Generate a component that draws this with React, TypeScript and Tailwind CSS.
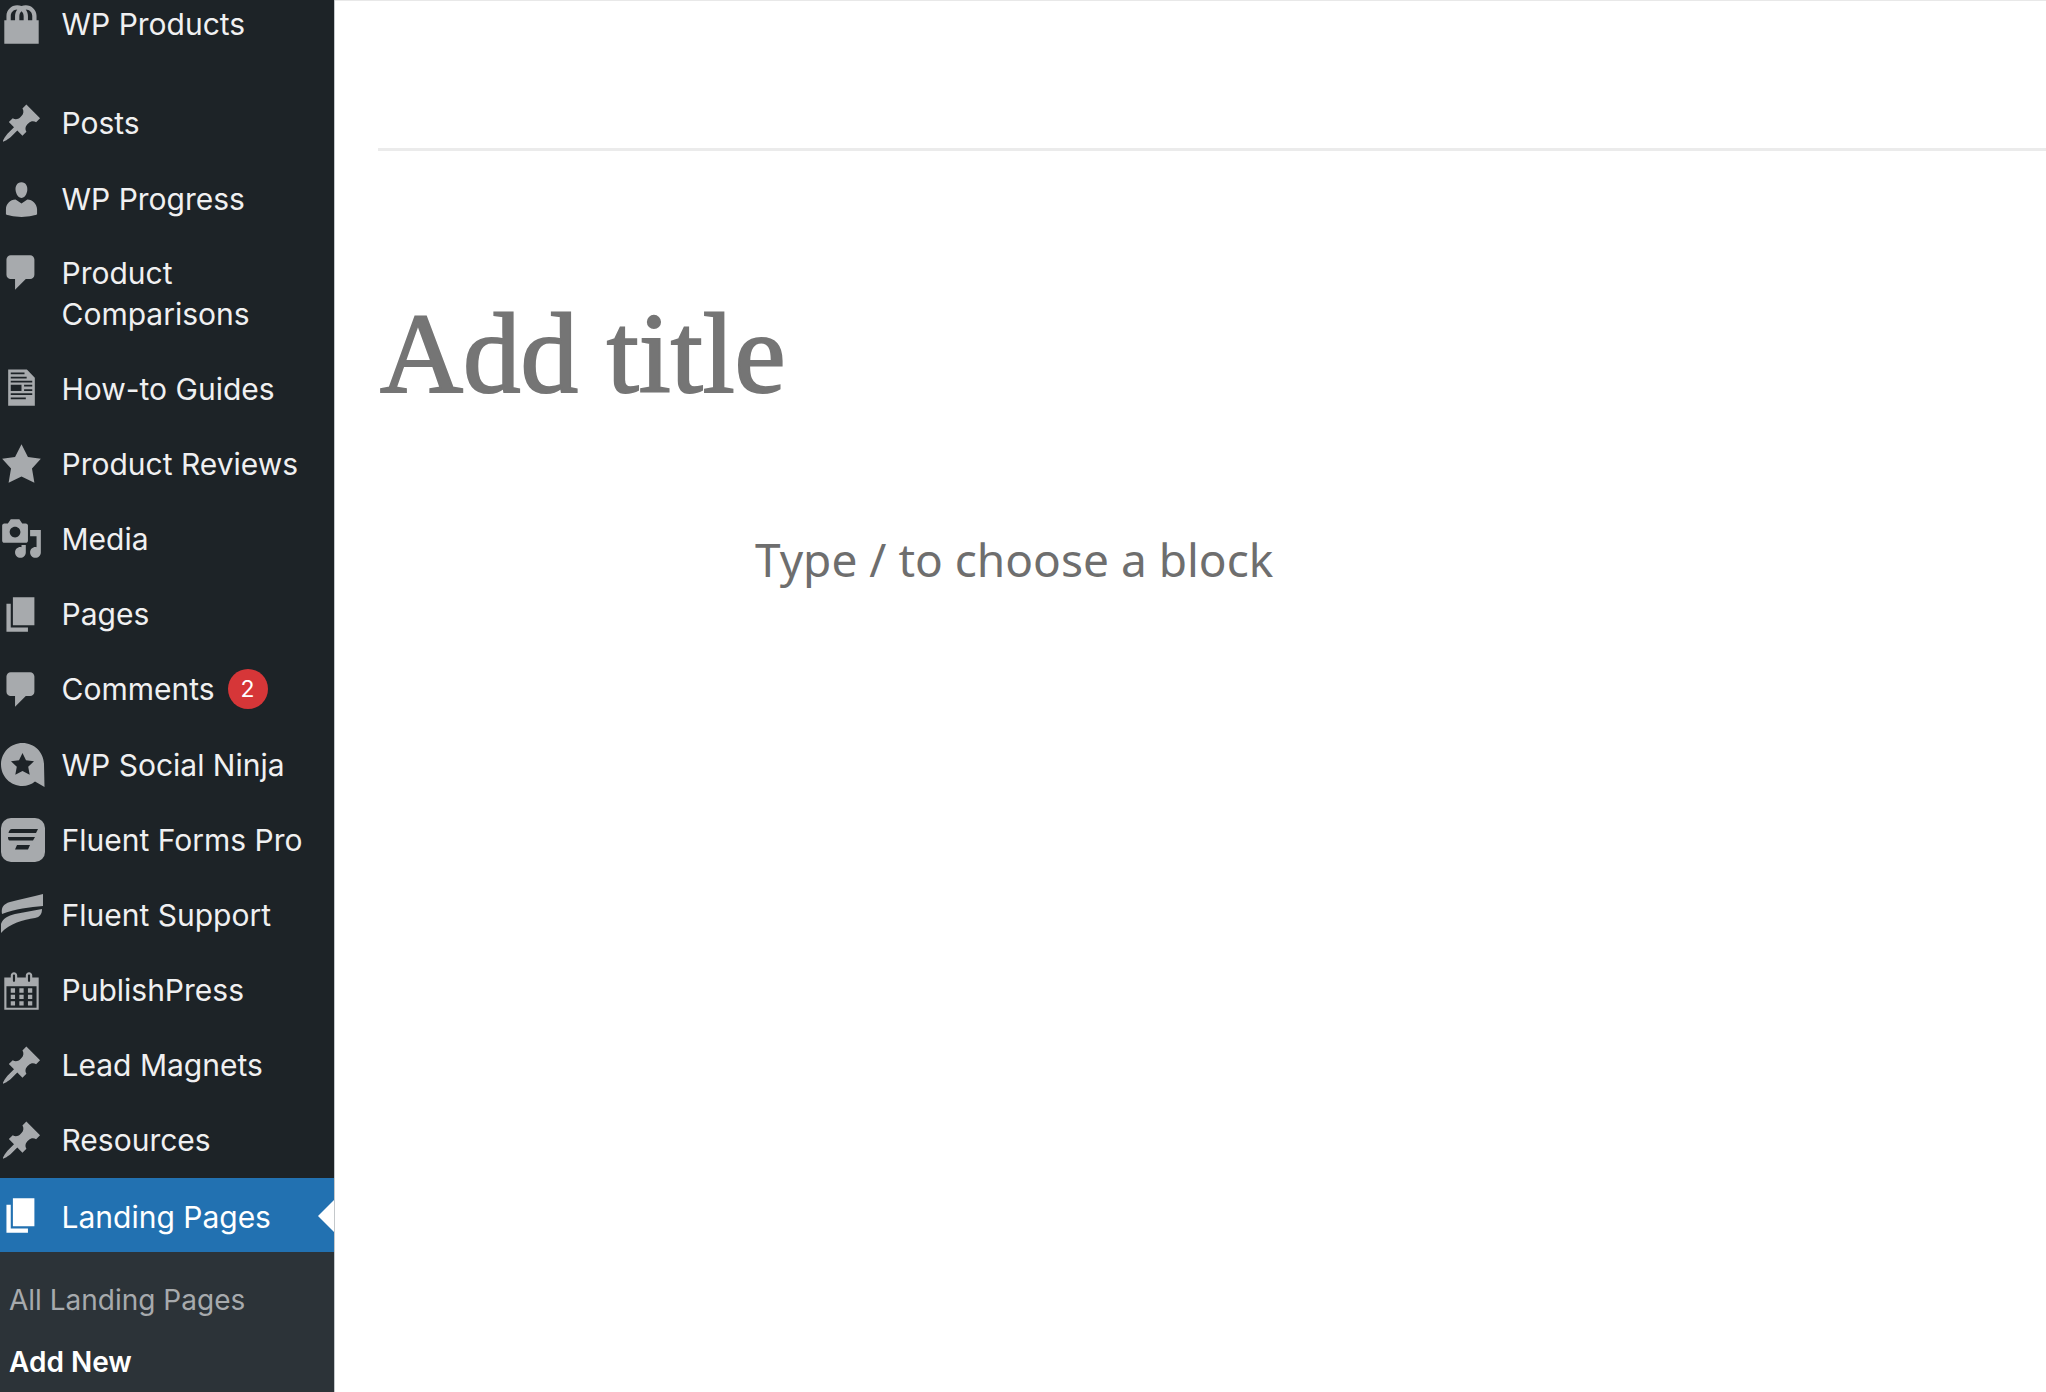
import type { ReactNode } from 'react'

const d = {
  bag: 'M17 8h1v11H2V8h1V6c0-2.76 2.24-5 5-5 .71 0 1.39.15 2 .42.61-.27 1.29-.42 2-.42 2.76 0 5 2.24 5 5v2zM5 6v2h2V6c0-1.13.39-2.16 1.02-3H8C6.35 3 5 4.35 5 6zm10 2V6c0-1.65-1.35-3-3-3h-.02c.63.84 1.02 1.87 1.02 3v2h2zm-5-4.22C9.39 4.33 9 5.12 9 6v2h2V6c0-.88-.39-1.67-1-2.22z',
  pin: 'M10.44 3.02l1.82-1.82 6.36 6.35-1.83 1.82c-1.05-.68-2.48-.57-3.41.36l-.75.75c-.92.93-1.04 2.35-.35 3.41l-1.83 1.82-2.41-2.41-2.8 2.79c-.42.42-3.38 2.71-3.8 2.29s1.86-3.39 2.28-3.81l2.79-2.79L4.1 9.36l1.83-1.82c1.05.69 2.48.57 3.4-.36l.75-.75c.93-.92 1.05-2.35.36-3.41z',
  user: 'M10 9.25c-2.27 0-2.73-3.44-2.73-3.44C7 4.02 7.82 2 9.97 2c2.16 0 2.98 2.02 2.71 3.81 0 0-.41 3.44-2.68 3.44zm0 2.57L12.72 10c2.39 0 4.52 2.33 4.52 4.53v2.49s-3.65 1.13-7.24 1.13c-3.65 0-7.24-1.13-7.24-1.13v-2.49c0-2.25 1.94-4.48 4.47-4.48z',
  comment: 'M5 2h9c1.1 0 2 .9 2 2v7c0 1.1-.9 2-2 2h-2l-5 5v-5H5c-1.1 0-2-.9-2-2V4c0-1.1.9-2 2-2z',
  doc: 'M3.800 1.200h8.700L16.200 5v13H3.800V1.200zM5 2.600v.8h6.400v-.8H5zm0 1.900v.8h7.400v-.8H5zm0 1.900v.8h10v-.8H5zm0 1.900v2.900h5V8.300H5zm6.200 0v.8H15v-.8h-3.800zm0 2.100v.8H15v-.8h-3.800zM5 12.200v.8h10v-.8H5zm0 2v.8h7v-.8H5z',
  star: 'M10 1l3 6 6 .75-4.12 4.62L16 19l-6-3-6 3 1.13-6.63L1 7.75 7 7z',
  media: 'M13 11V4c0-.55-.45-1-1-1h-1.67L9 1H5L3.67 3H2c-.55 0-1 .45-1 1v7c0 .55.45 1 1 1h10c.55 0 1-.45 1-1zM7 4.500c1.380 0 2.500 1.120 2.500 2.500S8.380 9.500 7 9.500 4.500 8.380 4.500 7 5.620 4.500 7 4.500zM14 6h5v10.500c0 1.380-1.120 2.500-2.500 2.500S14 17.880 14 16.500s1.120-2.500 2.500-2.500c.170 0 .340.020.500.050V9h-3V6zm-4 8.050V13h2v3.500c0 1.380-1.120 2.500-2.500 2.500S7 17.880 7 16.500 8.120 14 9.500 14c.170 0 .340.020.500.050z',
  page: 'M6 15V2h10v13H6zm-1 1h8v2H3V5h2v11z',
  calendar: 'M15 4h3v15H2V4h3V3c0-.41.15-.76.44-1.060.29-.29.65-.44 1.060-.44s.77.15 1.060.44c.29.3.44.65.44 1.060v1h4V3c0-.41.15-.76.44-1.060.29-.29.65-.44 1.060-.44s.77.15 1.060.44c.29.3.44.65.44 1.060v1zM6 3v2.500c0 .14.05.26.15.36.09.09.21.14.35.14s.26-.05.35-.14c.1-.1.15-.22.15-.36V3c0-.14-.05-.26-.15-.35-.09-.1-.21-.15-.35-.15s-.26.05-.35.15c-.1.09-.15.21-.15.35zm7 0v2.500c0 .14.05.26.14.36.1.09.22.14.36.14s.26-.05.36-.14c.09-.1.14-.22.14-.36V3c0-.14-.05-.26-.14-.35-.1-.1-.22-.15-.36-.15s-.26.05-.36.15c-.09.09-.14.21-.14.35zm4 15V8H3v10h14zM7 9v2H5V9h2zm2 0h2v2H9V9zm4 2V9h2v2h-2zm-6 1v2H5v-2h2zm2 0h2v2H9v-2zm4 2v-2h2v2h-2zm-6 1v2H5v-2h2zm4 2H9v-2h2v2zm4 0h-2v-2h2v2z',
}

const Dash = ({ path }: { path: string }) => (
  <svg viewBox="0 0 20 20" className="h-[43px] w-[43px]" fill="currentColor">
    <path d={path} fillRule="evenodd" />
  </svg>
)

const SocialNinja = () => (
  <svg viewBox="0 0 45 45" className="h-[45px] w-[45px]">
    <path d="M22.500 1C34.500 1 44 10.500 44 22.500L44.500 45 35 39.500C31.500 42.300 27.200 44 22.500 44 10.500 44 1 34.500 1 22.500S10.500 1 22.500 1z" fill="#a7aaad" />
    <path d="M22.500 11l3.500 7.200 8 1.100-5.800 5.500 1.500 7.900-7.200-3.800-7.200 3.800 1.500-7.900-5.800-5.500 8-1.100z" fill="#1d2327" />
  </svg>
)

const FluentForms = () => (
  <svg viewBox="0 0 45 45" className="h-[45px] w-[45px]">
    <rect x="1" y="1" width="44" height="44" rx="10" fill="#a7aaad" />
    <path d="M12 12h26l-2 4H8.500c.4-2.300 1.500-4 3.500-4zM8 20h27l-2 3.500H9.500C8.500 23.500 8 22 8 20zM17 28h13l-2 4.500H15z" fill="#1d2327" />
  </svg>
)

const FluentSupport = () => (
  <svg viewBox="0 0 45 45" className="h-[45px] w-[45px]">
    <path d="M43 2v12C30 15 15 17 2 22c-1-6 1-10 8-12C20 7 33 5 43 2z" fill="#a7aaad" />
    <path d="M42 17c0 5-2 8-7 9-12 2-25 5-34 15v-9c2-6 7-8 14-10 9-2 18-3 27-5z" fill="#a7aaad" />
  </svg>
)

const Row = ({ icon, height, children }: { icon: ReactNode; height: string; children: ReactNode }) => (
  <div className={`flex items-center text-[#f0f0f1] ${height}`}>
    <div className="flex w-[61.500px] shrink-0 items-center text-[#a7aaad]">{icon}</div>
    <div className="leading-[40px]">{children}</div>
  </div>
)

const rows: { label: string; icon: ReactNode }[] = [
  { label: 'How-to Guides', icon: <Dash path={d.doc} /> },
  { label: 'Product Reviews', icon: <Dash path={d.star} /> },
  { label: 'Media', icon: <Dash path={d.media} /> },
  { label: 'Pages', icon: <Dash path={d.page} /> },
  { label: 'Comments', icon: <Dash path={d.comment} /> },
  { label: 'WP Social Ninja', icon: <SocialNinja /> },
  { label: 'Fluent Forms Pro', icon: <FluentForms /> },
  { label: 'Fluent Support', icon: <FluentSupport /> },
  { label: 'PublishPress', icon: <Dash path={d.calendar} /> },
  { label: 'Lead Magnets', icon: <Dash path={d.pin} /> },
  { label: 'Resources', icon: <Dash path={d.pin} /> },
]

export default function App() {
  return (
    <div className="flex h-[1392px] overflow-hidden bg-white font-['Inter',sans-serif]">
      {/* Sidebar */}
      <aside className="flex w-[335px] shrink-0 flex-col border-r border-[#c4c8cb] bg-[#1d2327] text-[30px]">
        <Row icon={<Dash path={d.bag} />} height="h-[48px] mb-[37px]">WP Products</Row>
        <Row icon={<Dash path={d.pin} />} height="h-[76px]">Posts</Row>
        <Row icon={<Dash path={d.user} />} height="h-[76.500px]">WP Progress</Row>
        <div className="flex h-[113.500px] text-[#f0f0f1]">
          <div className="w-[61.500px] shrink-0 pt-[13px] text-[#a7aaad]"><Dash path={d.comment} /></div>
          <div className="pt-[15px] leading-[41px]">Product<br />Comparisons</div>
        </div>
        {rows.map(r => (
          <Row key={r.label} icon={r.icon} height="h-[75.200px]">
            {r.label === 'Comments' ? (
              <span className="flex items-center gap-[13px]">
                {r.label}
                <span className="flex h-[40px] w-[40px] items-center justify-center rounded-full bg-[#d63638] text-[23px] text-white">2</span>
              </span>
            ) : r.label}
          </Row>
        ))}

        {/* Active item */}
        <div className="relative flex h-[74px] items-center bg-[#2271b1] text-white">
          <div className="flex w-[61.500px] shrink-0 items-center"><Dash path={d.page} /></div>
          <div className="pt-[3px] leading-[40px]">Landing Pages</div>
          <div className="absolute right-0 top-[22px] h-0 w-0 border-y-[16px] border-r-[16px] border-y-transparent border-r-white" />
        </div>
        <div className="flex-1 bg-[#2c3338] pl-[9px] pt-[28px] text-[28px]">
          <div className="leading-[40px] text-[#a7aaad]">All Landing Pages</div>
          <div className="mt-[22px] font-semibold leading-[40px] text-white">Add New</div>
        </div>
      </aside>

      {/* Editor */}
      <main className="flex-1 border-t border-[#e8e8e8]">
        <div className="ml-[43px] mt-[147px] h-[3px] bg-[#ebebeb]" />
        <h1 className="ml-[45px] mt-[138px] font-['Liberation_Serif',serif] text-[115px] leading-[130px] text-[#757575] [-webkit-text-stroke:2px_#757575]">Add title</h1>
        <p className="ml-[420px] mt-[110px] font-['Noto_Sans',sans-serif] text-[46px] leading-[60px] text-[#6e6e6e]">Type / to choose a block</p>
      </main>
    </div>
  )
}
